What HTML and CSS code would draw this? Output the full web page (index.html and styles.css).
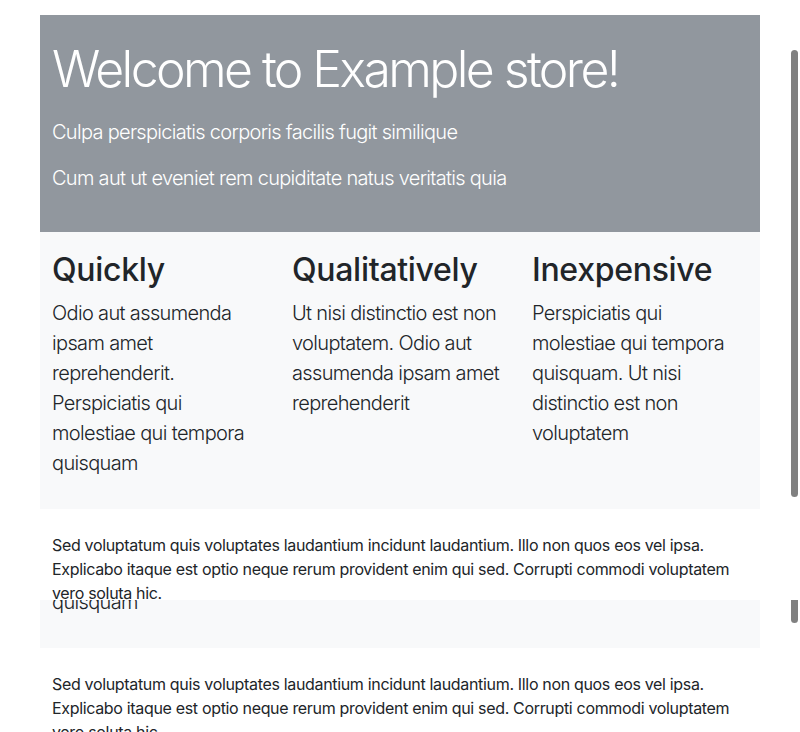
FILE: index.html
```html
<!DOCTYPE html>
<html lang="en">
<head>
<meta charset="utf-8">
<title>Example store</title>
<link rel="stylesheet" href="styles.css">
</head>
<body>
<div class="frame frame-top">
  <div class="page">
    <header class="hero">
      <h1 class="hero-title">Welcome to Example store!</h1>
      <p class="lead">Culpa perspiciatis corporis facilis fugit similique</p>
      <p class="lead">Cum aut ut eveniet rem cupiditate natus veritatis quia</p>
    </header>
    <section class="features">
      <div class="feature">
        <h2 class="feature-title">Quickly</h2>
        <p class="feature-text">Odio aut assumenda ipsam amet reprehenderit. Perspiciatis qui molestiae qui tempora quisquam</p>
      </div>
      <div class="feature">
        <h2 class="feature-title">Qualitatively</h2>
        <p class="feature-text">Ut nisi distinctio est non voluptatem. Odio aut assumenda ipsam amet reprehenderit</p>
      </div>
      <div class="feature">
        <h2 class="feature-title">Inexpensive</h2>
        <p class="feature-text">Perspiciatis qui molestiae qui tempora quisquam. Ut nisi distinctio est non voluptatem</p>
      </div>
    </section>
    <p class="note">Sed voluptatum quis voluptates laudantium incidunt laudantium. Illo non quos eos vel ipsa. Explicabo itaque est optio neque rerum provident enim qui sed. Corrupti commodi voluptatem vero soluta hic.</p>
  </div>
  <div class="thumb thumb-top"></div>
</div>
<div class="frame frame-bottom">
  <div class="page page-scrolled">
    <header class="hero">
      <h1 class="hero-title">Welcome to Example store!</h1>
      <p class="lead">Culpa perspiciatis corporis facilis fugit similique</p>
      <p class="lead">Cum aut ut eveniet rem cupiditate natus veritatis quia</p>
    </header>
    <section class="features">
      <div class="feature">
        <h2 class="feature-title">Quickly</h2>
        <p class="feature-text">Odio aut assumenda ipsam amet reprehenderit. Perspiciatis qui molestiae qui tempora quisquam</p>
      </div>
      <div class="feature">
        <h2 class="feature-title">Qualitatively</h2>
        <p class="feature-text">Ut nisi distinctio est non voluptatem. Odio aut assumenda ipsam amet reprehenderit</p>
      </div>
      <div class="feature">
        <h2 class="feature-title">Inexpensive</h2>
        <p class="feature-text">Perspiciatis qui molestiae qui tempora quisquam. Ut nisi distinctio est non voluptatem</p>
      </div>
    </section>
    <p class="note">Sed voluptatum quis voluptates laudantium incidunt laudantium. Illo non quos eos vel ipsa. Explicabo itaque est optio neque rerum provident enim qui sed. Corrupti commodi voluptatem vero soluta hic.</p>
  </div>
  <div class="thumb thumb-bottom"></div>
</div>
</body>
</html>
```
FILE: styles.css
```css
html, body {
  margin: 0;
  padding: 0;
  background: #fff;
  overflow: hidden;
}
body {
  font-family: Inter, "Noto Sans", "Liberation Sans", sans-serif;
  color: #212529;
  width: 800px;
  height: 732px;
}
.frame {
  position: relative;
  overflow: hidden;
  width: 800px;
}
.frame-top {
  height: 600px;
}
.frame-bottom {
  height: 132px;
}
.page {
  width: 720px;
  margin: 0 auto;
  padding-top: 15px;
}
.page-scrolled {
  margin-top: -461px;
}
.hero {
  background: #91979e;
  color: #fff;
  padding: 24px 12px 23px;
}
.hero-title {
  margin: 0 0 17px;
  font-size: 50px;
  font-weight: 300;
  line-height: 1.22;
  letter-spacing: -2.6px;
}
.lead {
  margin: 0 0 16px;
  font-size: 20px;
  font-weight: 300;
  line-height: 1.5;
  letter-spacing: -0.7px;
}
.features {
  background: #f8f9fa;
  display: grid;
  grid-template-columns: repeat(3, 1fr);
  padding: 19px 0 15px;
}
.feature {
  padding: 0 12px;
}
.feature-title {
  margin: 0 0 9px;
  font-size: 32px;
  font-weight: 500;
  line-height: 1.2;
  letter-spacing: -0.3px;
}
.feature-text {
  margin: 0 0 16px;
  font-size: 20px;
  font-weight: 300;
  line-height: 1.5;
  letter-spacing: -0.65px;
}
.note {
  margin: 24px 0 16px;
  padding: 0 12px;
  font-size: 16px;
  line-height: 1.5;
  letter-spacing: -0.33px;
}
.thumb {
  position: absolute;
  left: 791px;
  width: 7px;
  background: #808080;
  border-radius: 3.5px;
}
.thumb-top {
  top: 50px;
  height: 447px;
}
.thumb-bottom {
  top: -6px;
  height: 29px;
}
```
